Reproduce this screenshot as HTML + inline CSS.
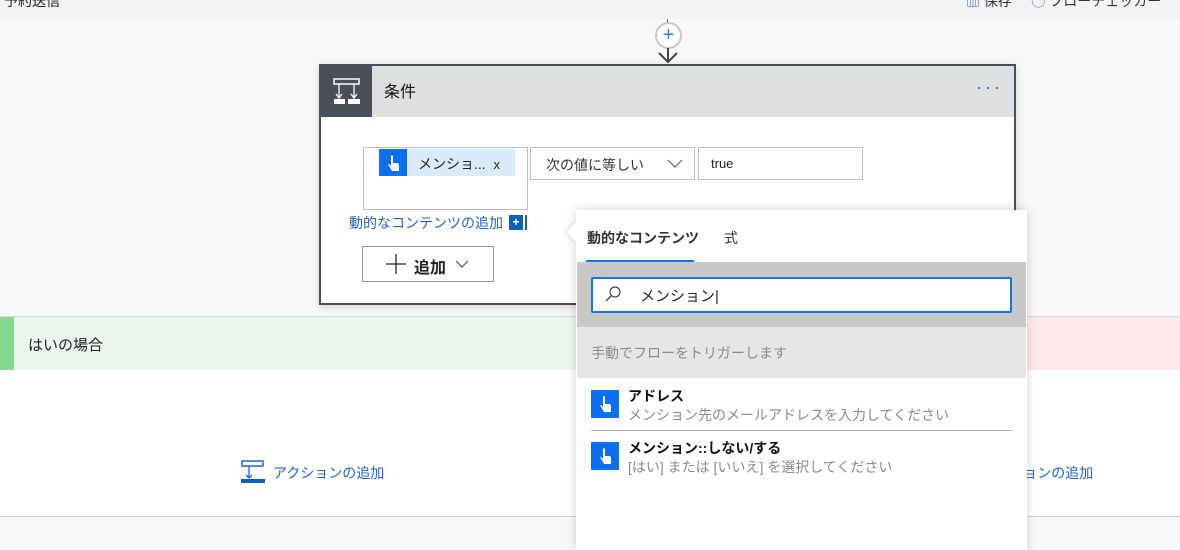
<!DOCTYPE html>
<html><head><meta charset="utf-8"><style>
*{box-sizing:border-box;margin:0;padding:0}
body{width:1180px;height:541px;overflow:hidden;background:#f8f8f8;font-family:"Liberation Sans","Noto Sans CJK JP",sans-serif;font-size:14px;color:#222;position:relative}
.a{position:absolute}
.hand{background:#0a6ff2;display:flex;align-items:center;justify-content:center}
</style></head><body>
<div class="a" style="left:0;top:0;width:1180px;height:19px;background:#f3f3f3"></div>
<div class="a" style="left:4px;top:-9px;font-size:14px">予約送信</div>
<div class="a" style="left:966px;top:-9px;font-size:14px;color:#333"><span style="color:#2466c6">▥</span> 保存 &nbsp;&nbsp;&nbsp; <span style="color:#2466c6">◯</span> フローチェッカー</div>

<!-- branches -->
<div class="a" style="left:0;top:316px;width:1180px;height:1px;background:#d8d8d8"></div>
<div class="a" style="left:0;top:317px;width:1180px;height:199px;background:#fff"></div>
<div class="a" style="left:0;top:317px;width:600px;height:53px;background:#ebf6ee"></div>
<div class="a" style="left:600px;top:317px;width:580px;height:53px;background:#fdebeb"></div>
<div class="a" style="left:0;top:317px;width:14px;height:53px;background:#86d890"></div>
<div class="a" style="left:28px;top:334px;font-size:15px">はいの場合</div>
<div class="a" style="left:0;top:516px;width:1180px;height:1px;background:#d5d5d5"></div>
<svg class="a" style="left:241px;top:460px" width="24" height="25"><rect x="1" y="1" width="21" height="5" fill="none" stroke="#2466c6" stroke-width="1.5"/><path d="M8 6v12M5 15l3 3 3-3" fill="none" stroke="#2466c6" stroke-width="1.3"/><rect x="0" y="19" width="24" height="4" fill="#0f5fb5"/></svg>
<div class="a" style="left:273px;top:463px;color:#2466c6;font-size:14px">アクションの追加</div>
<div class="a" style="left:982px;top:463px;color:#2466c6;font-size:14px">アクションの追加</div>

<!-- plus connector -->
<div class="a" style="left:667px;top:19px;width:1px;height:4px;background:#555"></div>
<div class="a" style="left:655px;top:22px;width:27px;height:27px;border:2px solid #c8c8c8;border-radius:50%;background:#fff;color:#2b7de9;font-size:20px;line-height:22px;text-align:center">+</div>
<svg class="a" style="left:656px;top:48px" width="24" height="16"><path d="M12 0v14M3 5l9 9 9-9" fill="none" stroke="#444" stroke-width="2"/></svg>

<!-- card -->
<div class="a" style="left:319px;top:64px;width:697px;height:241px;border:2px solid #4a4f57;background:#fff;box-shadow:0 2px 8px rgba(0,0,0,.15)"></div>
<div class="a" style="left:321px;top:66px;width:693px;height:51px;background:#dedfe1"></div>
<div class="a" style="left:321px;top:66px;width:51px;height:51px;background:#484f58"></div>
<svg class="a" style="left:333px;top:78px" width="28" height="27"><rect x="1" y="1" width="25" height="5" fill="none" stroke="#fff" stroke-width="1.5"/><path d="M6 6v14M21 6v14M3 16l3 4 3-4M18 16l3 4 3-4" fill="none" stroke="#fff" stroke-width="1.3"/><rect x="1" y="21" width="11" height="5" fill="#fff"/><rect x="15" y="21" width="12" height="5" fill="#fff"/></svg>
<div class="a" style="left:384px;top:78px;font-size:16px;color:#111">条件</div>
<div class="a" style="left:976px;top:78px;color:#0a6ff2;font-size:18px;letter-spacing:3px;line-height:18px">···</div>

<div class="a" style="left:363px;top:147px;width:165px;height:63px;border:1px solid #bbb"></div>
<div class="a" style="left:379px;top:149px;width:136px;height:27px;background:#d9eafb"></div>
<div class="a hand" style="left:379px;top:149px;width:28px;height:27px"><svg width="14" height="18"><path d="M5 2v10l-2-2c-1 0-1 1 0 2l3 5h7v-6c0-1-1-2-2-2h-4V2c0-1-2-1-2 0z" fill="#fff"/></svg></div>
<div class="a" style="left:418px;top:154px;font-size:14px">メンショ... &nbsp;<span style="font-size:13px">x</span></div>

<div class="a" style="left:530px;top:147px;width:165px;height:33px;border:1px solid #bbb;background:#fff"></div>
<div class="a" style="left:546px;top:155px;color:#333">次の値に等しい</div>
<svg class="a" style="left:667px;top:159px" width="16" height="9"><path d="M1 1l7 7 7-7" fill="none" stroke="#666" stroke-width="1.2"/></svg>
<div class="a" style="left:698px;top:147px;width:165px;height:33px;border:1px solid #bbb;background:#fff"></div>
<div class="a" style="left:711px;top:156px;font-size:13px">true</div>

<div class="a" style="left:349px;top:213px;color:#2466c6;font-size:14px">動的なコンテンツの追加</div>
<div class="a" style="left:509px;top:215px;width:14px;height:15px;background:#0f5fb5;color:#fff;font-size:12px;font-weight:bold;text-align:center;line-height:15px">+</div>
<div class="a" style="left:525px;top:215px;width:2px;height:15px;background:#0f5fb5"></div>

<div class="a" style="left:362px;top:246px;width:132px;height:36px;border:1px solid #999;background:#fff"></div>
<svg class="a" style="left:386px;top:254px" width="20" height="20"><path d="M10 0v20M0 10h20" stroke="#222" stroke-width="1.3"/></svg>
<div class="a" style="left:414px;top:254px;font-size:16px;font-weight:bold">追加</div>
<svg class="a" style="left:455px;top:260px" width="14" height="8"><path d="M1 1l6 6 6-6" fill="none" stroke="#555" stroke-width="1.2"/></svg>

<!-- popup -->
<div class="a" style="left:576px;top:210px;width:451px;height:340px;background:#fff;box-shadow:0 0 10px rgba(0,0,0,.18)"></div>
<div class="a" style="left:569px;top:225px;width:14px;height:14px;background:#fff;transform:rotate(45deg);box-shadow:-2px 2px 4px rgba(0,0,0,.1)"></div>
<div class="a" style="left:576px;top:220px;width:12px;height:26px;background:#fff"></div>
<div class="a" style="left:587px;top:228px;font-size:14px;font-weight:bold;color:#333">動的なコンテンツ</div>
<div class="a" style="left:724px;top:228px;font-size:14px;color:#333">式</div>
<div class="a" style="left:586px;top:260px;width:108px;height:2px;background:#1a73e8"></div>
<div class="a" style="left:577px;top:262px;width:449px;height:65px;background:#c8c9c7"></div>
<div class="a" style="left:591px;top:277px;width:421px;height:36px;border:2px solid #1a73e8;background:#fff;border-radius:2px"></div>
<svg class="a" style="left:604px;top:285px" width="18" height="18"><circle cx="11" cy="7" r="5" fill="none" stroke="#444" stroke-width="1.2"/><path d="M7 11l-5 5" stroke="#444" stroke-width="1.3"/></svg>
<div class="a" style="left:640px;top:285px;font-size:15px;color:#222">メンション<span style="font-weight:100">|</span></div>
<div class="a" style="left:577px;top:327px;width:449px;height:51px;background:#e6e7e5"></div>
<div class="a" style="left:591px;top:343px;font-size:14px;color:#8a8a8a">手動でフローをトリガーします</div>

<div class="a hand" style="left:591px;top:390px;width:28px;height:28px"><svg width="14" height="18"><path d="M5 2v10l-2-2c-1 0-1 1 0 2l3 5h7v-6c0-1-1-2-2-2h-4V2c0-1-2-1-2 0z" fill="#fff"/></svg></div>
<div class="a" style="left:628px;top:386px;font-size:14px;font-weight:bold;color:#111">アドレス</div>
<div class="a" style="left:628px;top:405px;font-size:14px;color:#8a8a8a">メンション先のメールアドレスを入力してください</div>
<div class="a" style="left:591px;top:430px;width:421px;height:1px;background:#b0b0b0"></div>
<div class="a hand" style="left:591px;top:442px;width:28px;height:28px"><svg width="14" height="18"><path d="M5 2v10l-2-2c-1 0-1 1 0 2l3 5h7v-6c0-1-1-2-2-2h-4V2c0-1-2-1-2 0z" fill="#fff"/></svg></div>
<div class="a" style="left:628px;top:438px;font-size:14px;font-weight:bold;color:#111">メンション::しない/する</div>
<div class="a" style="left:628px;top:457px;font-size:14px;color:#8a8a8a">[はい] または [いいえ] を選択してください</div>
</body></html>
